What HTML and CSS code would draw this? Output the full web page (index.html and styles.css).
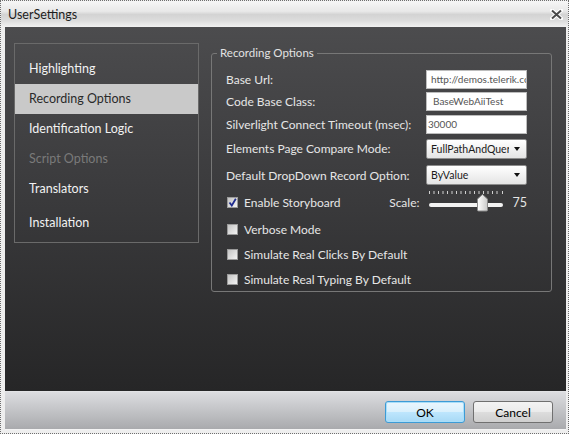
FILE: index.html
```html
<!DOCTYPE html>
<html>
<head>
<meta charset="utf-8">
<title>UserSettings</title>
<link rel="stylesheet" href="styles.css">
</head>
<body>
<div class="window">
  <div class="titlebar">
    <span class="title">UserSettings</span>
    <svg class="close" width="13" height="11" viewBox="0 0 13 11">
      <path d="M2 1.5 L11 9.5 M11 1.5 L2 9.5" stroke="#ffffff" stroke-width="4" stroke-linecap="round"/>
      <path d="M2 1.5 L11 9.5 M11 1.5 L2 9.5" stroke="#4a4a4a" stroke-width="2"/>
    </svg>
  </div>
  <div class="content">
    <nav class="nav">
      <div class="nav-item">Highlighting</div>
      <div class="nav-item selected">Recording Options</div>
      <div class="nav-item">Identification Logic</div>
      <div class="nav-item disabled">Script Options</div>
      <div class="nav-item">Translators</div>
      <div class="nav-item last">Installation</div>
    </nav>
    <fieldset class="group">
      <legend class="legend">Recording Options</legend>
      <div class="form">
        <div class="lbl">Base Url:</div>
        <div class="textbox">http://demos.telerik.com</div>

        <div class="lbl">Code Base Class:</div>
        <div class="textbox pad-wide">BaseWebAiiTest</div>

        <div class="lbl">Silverlight Connect Timeout (msec):</div>
        <div class="textbox pad-narrow">30000</div>

        <div class="lbl">Elements Page Compare Mode:</div>
        <div class="dropdown"><span class="dd-text">FullPathAndQuery</span><span class="dd-arrow"></span></div>

        <div class="lbl">Default DropDown Record Option:</div>
        <div class="dropdown"><span class="dd-text">ByValue</span><span class="dd-arrow"></span></div>

        <div class="check-row span">
          <span class="checkbox">
            <svg width="9" height="9" viewBox="0 0 9 9"><path d="M1.5 4.5 L3.8 7.5 L7.8 0.8" stroke="#1f2c8f" stroke-width="1.8" fill="none"/></svg>
          </span>
          <span class="check-label">Enable Storyboard</span>
          <div class="scale">
            <span class="scale-label">Scale:</span>
            <svg class="slider" width="76" height="22" viewBox="0 0 76 22">
              <defs>
                <linearGradient id="thumb" x1="0" y1="0" x2="1" y2="0">
                  <stop offset="0" stop-color="#ffffff"/>
                  <stop offset="1" stop-color="#c9c9c9"/>
                </linearGradient>
              </defs>
              <g stroke="#d0d0d0" stroke-width="1">
                <path d="M1.5 0 V3 M6 0 V3 M10.5 0 V3 M15 0 V3 M19.5 0 V3 M24 0 V3 M28.5 0 V3 M33 0 V3 M37.5 0 V3 M42 0 V3 M46.5 0 V3 M51 0 V3 M55.5 0 V3 M60 0 V3 M64.5 0 V3 M69 0 V3 M74.5 0 V3"/>
              </g>
              <rect x="1" y="12" width="74" height="4" rx="2" fill="#f2f2f2"/>
              <path d="M49.5 8 L54.5 3.5 L59.5 8 V19 Q59.5 20 58.5 20 H50.5 Q49.5 20 49.5 19 Z" fill="url(#thumb)" stroke="#8a8a8a" stroke-width="1"/>
            </svg>
            <span class="scale-value">75</span>
          </div>
        </div>

        <div class="check-row span">
          <span class="checkbox"></span>
          <span class="check-label">Verbose Mode</span>
        </div>

        <div class="check-row span">
          <span class="checkbox"></span>
          <span class="check-label">Simulate Real Clicks By Default</span>
        </div>

        <div class="check-row span">
          <span class="checkbox"></span>
          <span class="check-label">Simulate Real Typing By Default</span>
        </div>
      </div>
    </fieldset>
  </div>
  <div class="footer">
    <button class="btn btn-ok">OK</button>
    <button class="btn">Cancel</button>
  </div>
</div>
</body>
</html>
```

FILE: styles.css
```css
html, body {
  margin: 0;
  padding: 0;
  background: #ffffff;
}

body {
  font-family: Lato, "Noto Sans", "DejaVu Sans", sans-serif;
  font-size: 12px;
}

.window {
  width: 569px;
  height: 434px;
  box-sizing: border-box;
  border: 1px dotted #6e6e6e;
  background: #eeeeee;
  display: flex;
  flex-direction: column;
  padding: 0 2px 3px 4px;
}

.titlebar {
  height: 26px;
  flex: none;
  display: flex;
  align-items: center;
  justify-content: space-between;
  margin: 0 -2px 0 -4px;
  padding: 0 5px 0 7px;
  background: linear-gradient(#f6f6f6 0%, #e8e8e8 40%, #d3d3d3 52%, #dcdcdc 75%, #f1f1f1 100%);
}

.title {
  color: #1e1e1e;
  font-size: 12.5px;
  padding-top: 1px;
}

.close {
  display: block;
  margin-top: 1px;
}

.content {
  flex: 1;
  display: flex;
  align-items: flex-start;
  padding: 16px 0 0 9px;
  background: linear-gradient(#4c4c4e 0%, #3b3b3d 45%, #262627 100%);
}

.nav {
  width: 183px;
  flex: none;
  border: 1px solid #6a6a6a;
  padding-top: 10px;
  box-sizing: content-box;
  display: flex;
  flex-direction: column;
  height: 188px;
}

.nav-item {
  height: 30px;
  line-height: 30px;
  padding-left: 14px;
  color: #f2f2f2;
  font-size: 12.5px;
}

.nav-item.selected {
  background: #c9c9c9;
  color: #2a2a2a;
}

.nav-item.disabled {
  color: #7a7a7a;
}

.nav-item.last {
  flex: 1;
  line-height: 38px;
}

.group {
  width: 341px;
  box-sizing: border-box;
  margin: 2px 0 0 12px;
  padding: 0 24px 0 14px;
  border: 1px solid #777777;
  border-radius: 3px;
  min-width: 0;
}

.legend {
  color: #e2e2e2;
  padding: 0 3px;
  margin-left: -9px;
  line-height: 16px;
  font-size: 11.5px;
}

.form {
  margin-top: 7px;
  display: grid;
  grid-template-columns: 1fr 101px;
  grid-template-rows: 22px 23px 23px 25px 28px 27px 26px 25px 24px;
  align-items: center;
}

.lbl {
  color: #e6e6e6;
  white-space: nowrap;
}

.span {
  grid-column: 1 / 3;
}

.textbox {
  height: 17px;
  line-height: 17px;
  background: #ffffff;
  border: 1px solid #bdbdbd;
  color: #555555;
  font-size: 10px;
  padding-left: 4px;
  overflow: hidden;
  white-space: nowrap;
}

.textbox.pad-wide {
  padding-left: 6px;
}

.textbox.pad-narrow {
  padding-left: 1px;
}

.dropdown {
  height: 18px;
  border: 1px solid #8c8c8c;
  border-radius: 2px;
  background: linear-gradient(#ffffff, #e4e4e4);
  display: flex;
  align-items: center;
  justify-content: space-between;
  padding: 0 6px 0 4px;
  color: #1a1a1a;
  font-size: 10.5px;
  overflow: hidden;
}

.dd-text {
  white-space: nowrap;
  overflow: hidden;
  width: 78px;
}

.dd-arrow {
  width: 0;
  height: 0;
  border-left: 3.5px solid transparent;
  border-right: 3.5px solid transparent;
  border-top: 4px solid #111111;
  flex: none;
}

.check-row {
  display: flex;
  align-items: center;
  padding-left: 1px;
}

.checkbox {
  width: 9px;
  height: 9px;
  border: 1px solid #9a9a9a;
  background: linear-gradient(135deg, #c4c4c4, #f3f3f3);
  flex: none;
  display: flex;
  align-items: center;
  justify-content: center;
}

.checkbox svg {
  display: block;
}

.check-label {
  color: #e6e6e6;
  margin-left: 6px;
  white-space: nowrap;
}

.scale {
  margin-left: auto;
  display: flex;
  align-items: center;
}

.scale-label {
  color: #e6e6e6;
}

.slider {
  display: block;
  margin-left: 8px;
  margin-top: -2px;
}

.scale-value {
  color: #e6e6e6;
  margin-left: 9px;
  font-size: 12.5px;
}

.footer {
  height: 39px;
  flex: none;
  display: flex;
  justify-content: flex-end;
  align-items: flex-start;
  gap: 8px;
  padding: 9px 13px 0 0;
  box-sizing: border-box;
  border-top: 1px solid #e2e3e5;
  border-bottom: 1px solid #f4f4f4;
  background: linear-gradient(#dcdde0, #a9aaad);
}

.btn {
  width: 80px;
  height: 22px;
  box-sizing: border-box;
  font-family: Lato, "Noto Sans", sans-serif;
  font-size: 12px;
  color: #000000;
  border: 1px solid #707070;
  border-radius: 3px;
  background: linear-gradient(#f3f3f3 0%, #ebebeb 49%, #dddddd 50%, #cfcfcf 100%);
  padding: 0;
}

.btn-ok {
  border-color: #3c9bd6;
  background: linear-gradient(#eaf6fd 0%, #d9f0fc 49%, #bee6fd 50%, #a7d9f5 100%);
  box-shadow: inset 0 0 0 1px #a9def8;
}
```
